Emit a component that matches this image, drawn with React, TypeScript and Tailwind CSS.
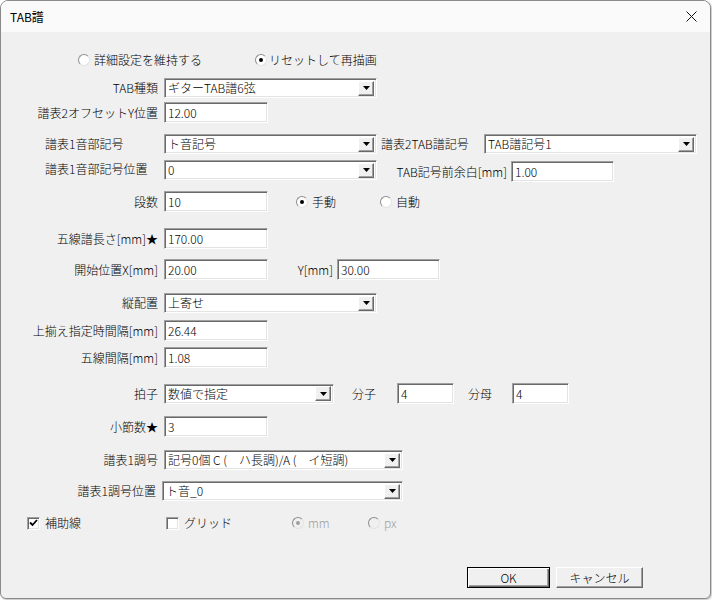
import React from "react";

const font = { fontFamily: '"Noto Sans CJK JP", "Liberation Sans", sans-serif' };

// classic sunken edit border
const sunken =
  "border border-t-[#a0a0a0] border-l-[#a0a0a0] border-b-white border-r-white shadow-[inset_1px_1px_0_#696969,inset_-1px_-1px_0_#e3e3e3]";

function Edit({ value, w }: { value: string; w: string }) {
  return (
    <div className={`${w} h-[21px] bg-white ${sunken} flex items-center pl-[3px] text-[12px] text-black leading-[16px]`}>
      {value}
    </div>
  );
}

function Combo({ value, w }: { value: string; w: string }) {
  return (
    <div className={`${w} h-[20px] bg-white ${sunken} flex items-center pl-[3px] pr-[2px] text-[12px] text-black leading-[16px]`}>
      <span className="flex-1 whitespace-pre">{value}</span>
      <span className="w-[16px] h-[15px] shrink-0 bg-[#f0f0f0] border border-t-white border-l-white border-b-[#696969] border-r-[#696969] shadow-[inset_-1px_-1px_0_#a0a0a0] flex items-center justify-center">
        <svg width="7" height="4" viewBox="0 0 7 4">
          <polygon points="0,0 7,0 3.5,4" fill="#000" />
        </svg>
      </span>
    </div>
  );
}

function Radio({ checked, disabled }: { checked?: boolean; disabled?: boolean }) {
  return (
    <span
      className={`w-[12px] h-[12px] shrink-0 rounded-full border border-t-[#8c8c8c] border-l-[#8c8c8c] border-b-[#e3e3e3] border-r-[#e3e3e3] flex items-center justify-center ${
        disabled ? "bg-[#f0f0f0]" : "bg-white"
      }`}
    >
      {checked && <span className={`w-[4px] h-[4px] rounded-full ${disabled ? "bg-[#a0a0a0]" : "bg-black"}`} />}
    </span>
  );
}

function Check({ checked }: { checked?: boolean }) {
  return (
    <span className={`w-[13px] h-[13px] shrink-0 bg-white ${sunken} flex items-center justify-center`}>
      {checked && (
        <svg width="9" height="8" viewBox="0 0 9 8">
          <path d="M1 3.5 L3.5 6 L8 1" stroke="#000" strokeWidth="1.8" fill="none" />
        </svg>
      )}
    </span>
  );
}

function Label({ children, left }: { children: React.ReactNode; left?: boolean }) {
  return (
    <div
      className={`w-[163px] shrink-0 text-[12px] whitespace-nowrap ${left ? "pl-[44px] text-left" : "pr-[6px] text-right"}`}
    >
      {children}
    </div>
  );
}

export default function App() {
  return (
    <div style={font} className="w-[712px] h-[600px] bg-white font-light">
      <div className="w-[711px] h-[599px] flex flex-col border border-[#8a8a8a] rounded-t-[8px] rounded-b-[6px] overflow-hidden bg-[#f0f0f0] text-black shadow-[1px_1px_2px_rgba(0,0,0,0.25)]">
        {/* Title bar */}
        <div className="h-[31px] shrink-0 bg-[#fafafa] flex items-center justify-between pl-[9px] pr-[13px]">
          <span className="text-[12px] font-normal">TAB譜</span>
          <svg width="11" height="11" viewBox="0 0 11 11">
            <path d="M0.5 0.5 L10.5 10.5 M10.5 0.5 L0.5 10.5" stroke="#111" strokeWidth="1" />
          </svg>
        </div>

        {/* Body */}
        <div className="flex flex-col text-[12px]">
          {/* mode radios */}
          <div className="mt-[20px] h-[16px] flex items-center pl-[77px]">
            <div className="w-[177px] flex items-center gap-[4px]">
              <Radio />
              <span>詳細設定を維持する</span>
            </div>
            <div className="flex items-center gap-[2px]">
              <Radio checked />
              <span>リセットして再描画</span>
            </div>
          </div>

          <div className="mt-[10px] flex items-center">
            <Label>TAB種類</Label>
            <Combo value="ギターTAB譜6弦" w="w-[213px]" />
          </div>

          <div className="mt-[4px] flex items-center">
            <Label>譜表2オフセットY位置</Label>
            <Edit value="12.00" w="w-[104px]" />
          </div>

          <div className="mt-[11px] flex items-center">
            <Label left>譜表1音部記号</Label>
            <Combo value="ト音記号" w="w-[213px]" />
            <div className="w-[107px] pl-[4px] whitespace-nowrap">譜表2TAB譜記号</div>
            <Combo value="TAB譜記号1" w="w-[213px]" />
          </div>

          <div className="mt-[6px] flex items-start">
            <Label left>譜表1音部記号位置</Label>
            <Combo value="0" w="w-[213px]" />
            <div className="w-[134px] pr-[4px] text-right whitespace-nowrap mt-[3px]">TAB記号前余白[mm]</div>
            <div className="mt-[1px]">
              <Edit value="1.00" w="w-[103px]" />
            </div>
          </div>

          <div className="mt-[9px] flex items-center">
            <Label>段数</Label>
            <Edit value="10" w="w-[104px]" />
            <div className="ml-[28px] w-[84px] flex items-center gap-[4px]">
              <Radio checked />
              <span>手動</span>
            </div>
            <div className="flex items-center gap-[4px]">
              <Radio />
              <span>自動</span>
            </div>
          </div>

          <div className="mt-[16px] flex items-center">
            <Label>五線譜長さ[mm]★</Label>
            <Edit value="170.00" w="w-[104px]" />
          </div>

          <div className="mt-[10px] flex items-center">
            <Label>開始位置X[mm]</Label>
            <Edit value="20.00" w="w-[104px]" />
            <div className="w-[69px] pr-[4px] text-right whitespace-nowrap">Y[mm]</div>
            <Edit value="30.00" w="w-[103px]" />
          </div>

          <div className="mt-[13px] flex items-center">
            <Label>縦配置</Label>
            <Combo value="上寄せ" w="w-[213px]" />
          </div>

          <div className="mt-[7px] flex items-center">
            <Label>上揃え指定時間隔[mm]</Label>
            <Edit value="26.44" w="w-[104px]" />
          </div>

          <div className="mt-[6px] flex items-center">
            <Label>五線間隔[mm]</Label>
            <Edit value="1.08" w="w-[104px]" />
          </div>

          <div className="mt-[15px] flex items-center">
            <Label>拍子</Label>
            <Combo value="数値で指定" w="w-[170px]" />
            <div className="w-[63px] pl-[18px]">分子</div>
            <Edit value="4" w="w-[57px]" />
            <div className="w-[58px] pl-[14px]">分母</div>
            <Edit value="4" w="w-[57px]" />
          </div>

          <div className="mt-[12px] flex items-center">
            <Label>小節数★</Label>
            <Edit value="3" w="w-[104px]" />
          </div>

          <div className="mt-[13px] flex items-center">
            <Label>譜表1調号</Label>
            <Combo value="記号0個 C (　ハ長調)/A (　イ短調)" w="w-[239px]" />
          </div>

          <div className="mt-[11px] flex items-center">
            <div className="w-[161px] shrink-0 pr-[6px] text-right whitespace-nowrap">譜表1調号位置</div>
            <Combo value="ト音_0" w="w-[241px]" />
          </div>

          <div className="mt-[14px] h-[16px] flex items-center pl-[26px]">
            <div className="w-[139px] flex items-center gap-[5px]">
              <Check checked />
              <span>補助線</span>
            </div>
            <div className="w-[126px] flex items-center gap-[5px]">
              <Check />
              <span>グリッド</span>
            </div>
            <div className="w-[76px] flex items-center gap-[4px] text-[#a0a0a0]">
              <Radio checked disabled />
              <span>mm</span>
            </div>
            <div className="flex items-center gap-[4px] text-[#a0a0a0]">
              <Radio disabled />
              <span>px</span>
            </div>
          </div>

          <div className="mt-[36px] flex items-center pl-[466px] gap-[6px]">
            <button className="w-[83px] h-[21px] bg-[#f0f0f0] border border-black shadow-[inset_1px_1px_0_#fff,inset_-1px_-1px_0_#696969,inset_-2px_-2px_0_#a0a0a0] text-[12px]">
              OK
            </button>
            <button className="w-[87px] h-[21px] bg-[#f0f0f0] border border-t-white border-l-white border-b-[#696969] border-r-[#696969] shadow-[inset_-1px_-1px_0_#a0a0a0] text-[12px]">
              キャンセル
            </button>
          </div>
        </div>
      </div>
    </div>
  );
}
